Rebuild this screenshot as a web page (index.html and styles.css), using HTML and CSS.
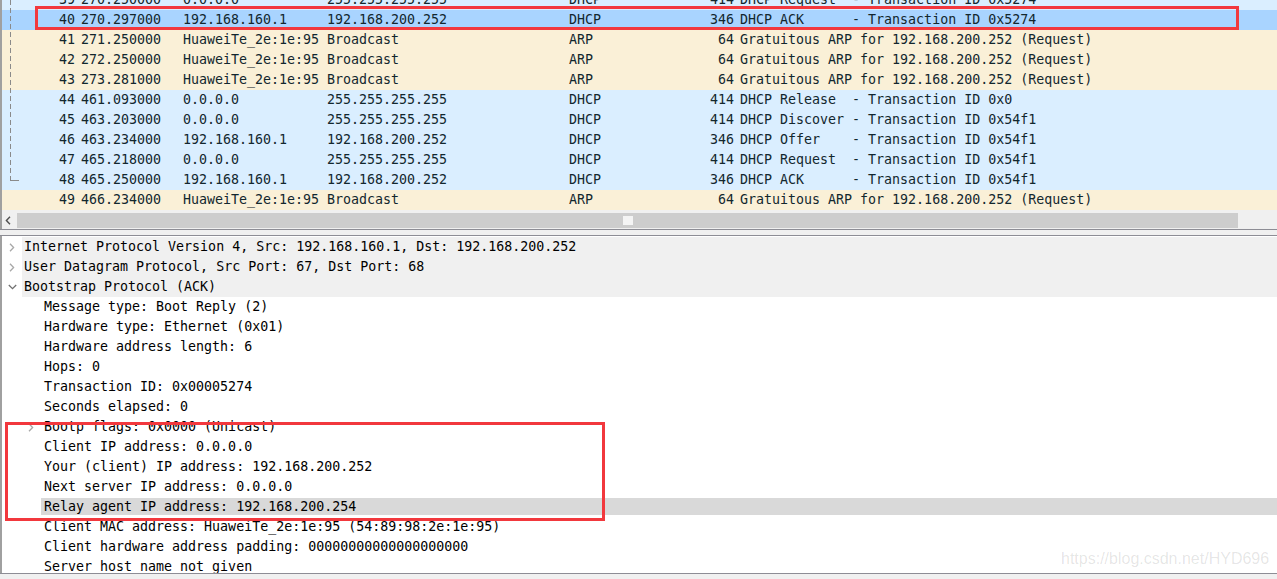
FILE: index.html
```html
<!DOCTYPE html>
<html>
<head>
<meta charset="utf-8">
<title>Wireshark</title>
<link rel="stylesheet" href="styles.css">
</head>
<body>
<div class="app">
  <div class="top-pane">
    <div class="packets">
      <div class="list">
        <div class="row udp"><span class="c-no">39</span><span class="c-time">270.250000</span><span class="c-src">0.0.0.0</span><span class="c-dst">255.255.255.255</span><span class="c-proto">DHCP</span><span class="c-len">414</span><span class="c-info">DHCP Request  - Transaction ID 0x5274</span></div>
        <div class="row sel"><span class="c-no">40</span><span class="c-time">270.297000</span><span class="c-src">192.168.160.1</span><span class="c-dst">192.168.200.252</span><span class="c-proto">DHCP</span><span class="c-len">346</span><span class="c-info">DHCP ACK      - Transaction ID 0x5274</span></div>
        <div class="row arp"><span class="c-no">41</span><span class="c-time">271.250000</span><span class="c-src">HuaweiTe_2e:1e:95</span><span class="c-dst">Broadcast</span><span class="c-proto">ARP</span><span class="c-len">64</span><span class="c-info">Gratuitous ARP for 192.168.200.252 (Request)</span></div>
        <div class="row arp"><span class="c-no">42</span><span class="c-time">272.250000</span><span class="c-src">HuaweiTe_2e:1e:95</span><span class="c-dst">Broadcast</span><span class="c-proto">ARP</span><span class="c-len">64</span><span class="c-info">Gratuitous ARP for 192.168.200.252 (Request)</span></div>
        <div class="row arp"><span class="c-no">43</span><span class="c-time">273.281000</span><span class="c-src">HuaweiTe_2e:1e:95</span><span class="c-dst">Broadcast</span><span class="c-proto">ARP</span><span class="c-len">64</span><span class="c-info">Gratuitous ARP for 192.168.200.252 (Request)</span></div>
        <div class="row udp"><span class="c-no">44</span><span class="c-time">461.093000</span><span class="c-src">0.0.0.0</span><span class="c-dst">255.255.255.255</span><span class="c-proto">DHCP</span><span class="c-len">414</span><span class="c-info">DHCP Release  - Transaction ID 0x0</span></div>
        <div class="row udp"><span class="c-no">45</span><span class="c-time">463.203000</span><span class="c-src">0.0.0.0</span><span class="c-dst">255.255.255.255</span><span class="c-proto">DHCP</span><span class="c-len">414</span><span class="c-info">DHCP Discover - Transaction ID 0x54f1</span></div>
        <div class="row udp"><span class="c-no">46</span><span class="c-time">463.234000</span><span class="c-src">192.168.160.1</span><span class="c-dst">192.168.200.252</span><span class="c-proto">DHCP</span><span class="c-len">346</span><span class="c-info">DHCP Offer    - Transaction ID 0x54f1</span></div>
        <div class="row udp"><span class="c-no">47</span><span class="c-time">465.218000</span><span class="c-src">0.0.0.0</span><span class="c-dst">255.255.255.255</span><span class="c-proto">DHCP</span><span class="c-len">414</span><span class="c-info">DHCP Request  - Transaction ID 0x54f1</span></div>
        <div class="row udp"><span class="c-no">48</span><span class="c-time">465.250000</span><span class="c-src">192.168.160.1</span><span class="c-dst">192.168.200.252</span><span class="c-proto">DHCP</span><span class="c-len">346</span><span class="c-info">DHCP ACK      - Transaction ID 0x54f1</span></div>
        <div class="row arp"><span class="c-no">49</span><span class="c-time">466.234000</span><span class="c-src">HuaweiTe_2e:1e:95</span><span class="c-dst">Broadcast</span><span class="c-proto">ARP</span><span class="c-len">64</span><span class="c-info">Gratuitous ARP for 192.168.200.252 (Request)</span></div>
      </div>
      <div class="related"></div>
    </div>
    <div class="hscroll">
      <div class="arrow-btn">
        <svg width="6" height="9" viewBox="0 0 6 9"><polyline points="5,0.8 1.4,4.5 5,8.2" fill="none" stroke="#505050" stroke-width="1.4"/></svg>
      </div>
      <div class="thumb"><span class="grip"></span></div>
      <div class="track-rest"></div>
    </div>
  </div>
  <div class="splitter"></div>
  <div class="details">
    <div class="drow head"><span class="exp"><svg class="chev" width="6" height="9" viewBox="0 0 6 9"><polyline points="1,0.8 4.6,4.5 1,8.2" fill="none" stroke="#a8a8a8" stroke-width="1.3"/></svg></span><span class="lbl">Internet Protocol Version 4, Src: 192.168.160.1, Dst: 192.168.200.252</span></div>
    <div class="drow head"><span class="exp"><svg class="chev" width="6" height="9" viewBox="0 0 6 9"><polyline points="1,0.8 4.6,4.5 1,8.2" fill="none" stroke="#a8a8a8" stroke-width="1.3"/></svg></span><span class="lbl">User Datagram Protocol, Src Port: 67, Dst Port: 68</span></div>
    <div class="drow head"><span class="exp"><svg class="chev-down" width="9" height="6" viewBox="0 0 9 6"><polyline points="0.8,1 4.5,4.6 8.2,1" fill="none" stroke="#707070" stroke-width="1.3"/></svg></span><span class="lbl">Bootstrap Protocol (ACK)</span></div>
    <div class="drow child"><span class="exp"></span><span class="lbl">Message type: Boot Reply (2)</span></div>
    <div class="drow child"><span class="exp"></span><span class="lbl">Hardware type: Ethernet (0x01)</span></div>
    <div class="drow child"><span class="exp"></span><span class="lbl">Hardware address length: 6</span></div>
    <div class="drow child"><span class="exp"></span><span class="lbl">Hops: 0</span></div>
    <div class="drow child"><span class="exp"></span><span class="lbl">Transaction ID: 0x00005274</span></div>
    <div class="drow child"><span class="exp"></span><span class="lbl">Seconds elapsed: 0</span></div>
    <div class="drow child"><span class="exp sub"><svg class="chev" width="6" height="9" viewBox="0 0 6 9"><polyline points="1,0.8 4.6,4.5 1,8.2" fill="none" stroke="#a8a8a8" stroke-width="1.3"/></svg></span><span class="lbl">Bootp flags: 0x0000 (Unicast)</span></div>
    <div class="drow child"><span class="exp"></span><span class="lbl">Client IP address: 0.0.0.0</span></div>
    <div class="drow child"><span class="exp"></span><span class="lbl">Your (client) IP address: 192.168.200.252</span></div>
    <div class="drow child"><span class="exp"></span><span class="lbl">Next server IP address: 0.0.0.0</span></div>
    <div class="drow child hl"><span class="exp"></span><span class="lbl">Relay agent IP address: 192.168.200.254</span></div>
    <div class="drow child"><span class="exp"></span><span class="lbl">Client MAC address: HuaweiTe_2e:1e:95 (54:89:98:2e:1e:95)</span></div>
    <div class="drow child"><span class="exp"></span><span class="lbl">Client hardware address padding: 00000000000000000000</span></div>
    <div class="drow child"><span class="exp"></span><span class="lbl">Server host name not given</span></div>
  </div>
  <div class="status"></div>

  <div class="mark mark-top"></div>
  <div class="mark mark-bottom"></div>
  <div class="watermark">https://blog.csdn.net/HYD696</div>
</div>
</body>
</html>
```

FILE: styles.css
```css
html, body {
  margin: 0;
  padding: 0;
  background: #ffffff;
}

body {
  width: 1277px;
  height: 579px;
  overflow: hidden;
}

.app {
  position: relative;
  width: 1277px;
  height: 579px;
  display: flex;
  flex-direction: column;
  font-family: "DejaVu Sans Mono", "Liberation Mono", monospace;
  font-size: 13.3px;
}

.top-pane {
  border-left: 2px solid #a0a0a0;
  display: flex;
  flex-direction: column;
}

.packets {
  position: relative;
  height: 210px;
  overflow: hidden;
  background: #ffffff;
}

.list {
  margin-top: -10px;
}

.row {
  display: grid;
  grid-template-columns: 75px 106px 144px 242px 120px 48px 1fr;
  height: 20px;
  line-height: 20px;
  color: #12272e;
  white-space: pre;
}

.row.udp { background: #daeeff; }
.row.arp { background: #faf0d7; }
.row.sel { background: #a9d4ff; }

.c-no { text-align: right; padding-right: 2px; }
.c-time { padding-left: 4px; }
.c-len { text-align: right; padding-right: 3px; }
.c-info { padding-left: 3px; }

.related {
  position: absolute;
  left: 8px;
  top: 0;
  width: 9px;
  height: 181px;
  background:
    repeating-linear-gradient(to bottom, #8a8a8a 0 5px, transparent 5px 8px) left top / 1px 100% no-repeat,
    linear-gradient(#8a8a8a, #8a8a8a) left bottom / 9px 1px no-repeat;
}

.hscroll {
  height: 19px;
  box-sizing: border-box;
  padding: 3px 0 1px 0;
  display: flex;
  background: #f0f0f0;
}

.arrow-btn {
  width: 15px;
  display: flex;
  align-items: center;
  padding-left: 3px;
  box-sizing: border-box;
}

.thumb {
  width: 1221px;
  background: #cdcdcd;
  display: flex;
  align-items: center;
  justify-content: center;
}

.grip {
  width: 10px;
  height: 9px;
  background: #f4f4f4;
}

.track-rest {
  flex: 1;
}

.splitter {
  height: 5px;
  border-top: 1px solid #8d8d95;
  border-bottom: 1px solid #8d8d95;
  background: #f0f0f0;
}

.details {
  height: 337px;
  box-sizing: border-box;
  padding-top: 1px;
  overflow: hidden;
  border-left: 2px solid #a0a0a0;
  background: #ffffff;
  color: #000000;
}

.drow {
  display: flex;
  height: 20px;
  line-height: 20px;
  white-space: pre;
}

.drow .exp {
  flex: none;
  display: flex;
  align-items: center;
}

.drow.head .exp {
  width: 20px;
  justify-content: center;
}

.drow.head .lbl {
  flex: 1;
  background: #f0f0f0;
  padding-left: 2px;
}

.drow.child .exp {
  width: 39px;
}

.drow.child .exp.sub {
  padding-left: 26px;
  box-sizing: border-box;
}

.drow.child .lbl {
  flex: 1;
  padding-left: 3px;
}

.drow.hl .lbl {
  background: #d9d9d9;
  margin: 1px 0 2px 0;
  line-height: 17px;
}

.status {
  height: 5px;
  border-top: 1px solid #8d8d95;
  background: #f0f0f0;
}

.mark {
  position: absolute;
  border: 3px solid #f2383d;
  box-sizing: border-box;
}

.mark-top {
  left: 35px;
  top: 6px;
  width: 1204px;
  height: 24px;
}

.mark-bottom {
  left: 5px;
  top: 422px;
  width: 600px;
  height: 99px;
}

.watermark {
  position: absolute;
  left: 1061px;
  top: 550px;
  font-family: "Liberation Sans", Arial, sans-serif;
  font-size: 16px;
  line-height: 18px;
  color: rgba(0, 0, 0, 0.11);
  white-space: nowrap;
}
```
